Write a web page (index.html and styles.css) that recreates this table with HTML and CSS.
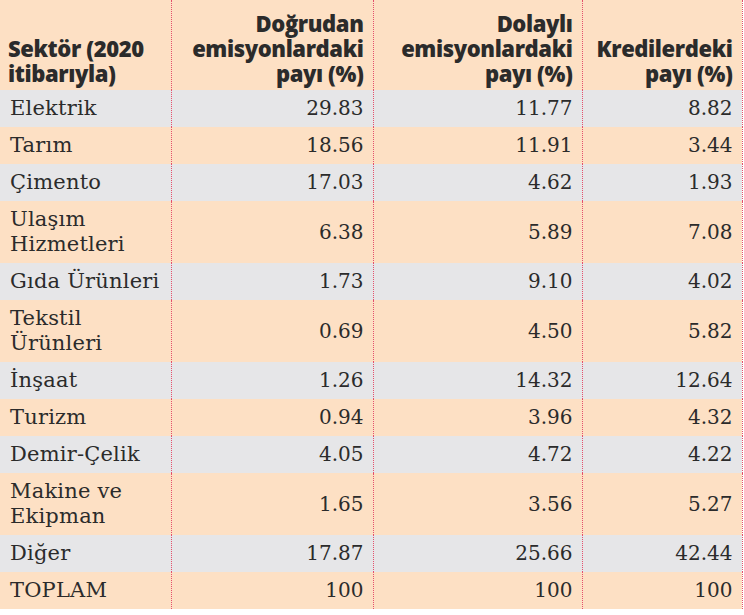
FILE: index.html
```html
<!DOCTYPE html>
<html lang="tr">
<head>
<meta charset="utf-8">
<link rel="stylesheet" href="styles.css">
</head>
<body>
<table class="data">
  <colgroup>
    <col class="c1"><col class="c2"><col class="c3"><col class="c4">
  </colgroup>
  <thead>
    <tr class="head">
      <th class="left">Sektör (2020<br>itibarıyla)</th>
      <th>Doğrudan<br>emisyonlardaki<br>payı (%)</th>
      <th>Dolaylı<br>emisyonlardaki<br>payı (%)</th>
      <th>Kredilerdeki<br>payı (%)</th>
    </tr>
  </thead>
  <tbody>
    <tr class="gray"><td>Elektrik</td><td>29.83</td><td>11.77</td><td>8.82</td></tr>
    <tr class="peach"><td>Tarım</td><td>18.56</td><td>11.91</td><td>3.44</td></tr>
    <tr class="gray"><td>Çimento</td><td>17.03</td><td>4.62</td><td>1.93</td></tr>
    <tr class="peach"><td>Ulaşım<br>Hizmetleri</td><td>6.38</td><td>5.89</td><td>7.08</td></tr>
    <tr class="gray"><td>Gıda Ürünleri</td><td>1.73</td><td>9.10</td><td>4.02</td></tr>
    <tr class="peach"><td>Tekstil<br>Ürünleri</td><td>0.69</td><td>4.50</td><td>5.82</td></tr>
    <tr class="gray"><td>İnşaat</td><td>1.26</td><td>14.32</td><td>12.64</td></tr>
    <tr class="peach"><td>Turizm</td><td>0.94</td><td>3.96</td><td>4.32</td></tr>
    <tr class="gray"><td>Demir-Çelik</td><td>4.05</td><td>4.72</td><td>4.22</td></tr>
    <tr class="peach"><td>Makine ve<br>Ekipman</td><td>1.65</td><td>3.56</td><td>5.27</td></tr>
    <tr class="gray"><td>Diğer</td><td>17.87</td><td>25.66</td><td>42.44</td></tr>
    <tr class="peach"><td>TOPLAM</td><td>100</td><td>100</td><td>100</td></tr>
  </tbody>
</table>
</body>
</html>
```

FILE: styles.css
```css
html, body {
  margin: 0;
  padding: 0;
  background: #ffffff;
}

.data {
  border-collapse: collapse;
  table-layout: fixed;
  width: 742px;
  color: #2b2b2b;
}

.c1 { width: 171px; }
.c2 { width: 202px; }
.c3 { width: 209px; }
.c4 { width: 160px; }

.data th,
.data td {
  border-right: 1px dotted #e4506c;
  vertical-align: middle;
}

.head th {
  background: #fde0c4;
  font-family: "Open Sans", "Liberation Sans", sans-serif;
  font-weight: 800;
  font-size: 22px;
  line-height: 25px;
  letter-spacing: -0.4px;
  text-align: right;
  vertical-align: bottom;
  padding: 11px 9px 4px 9px;
  height: 75px;
  white-space: nowrap;
}

.head th.left {
  text-align: left;
  padding-left: 8px;
}

.data td {
  font-family: "DejaVu Serif", "Liberation Serif", serif;
  font-size: 20px;
  line-height: 25px;
  padding: 6px 9px 6px 9px;
  text-align: right;
}

.data td:first-child {
  text-align: left;
  padding-left: 10px;
  padding-right: 2px;
  font-size: 21px;
  letter-spacing: 0.2px;
  white-space: nowrap;
}

.gray td { background: #e6e6e8; }
.peach td { background: #fde0c4; }
```
